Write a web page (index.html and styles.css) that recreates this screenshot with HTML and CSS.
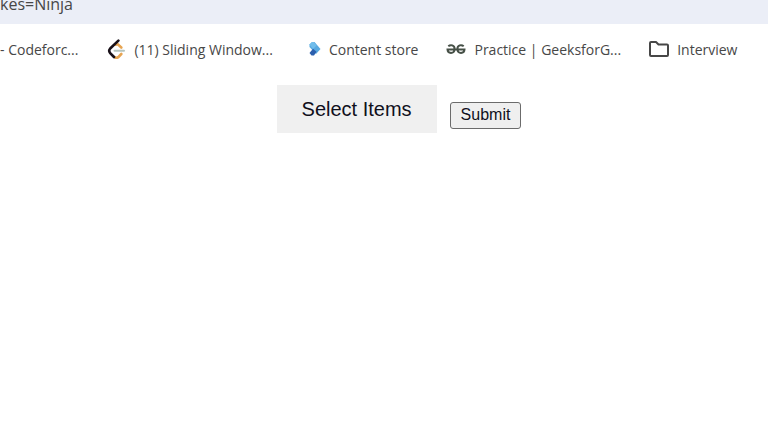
FILE: index.html
```html
<!DOCTYPE html>
<html lang="en">
<head>
  <meta charset="UTF-8">
  <meta name="viewport" content="width=device-width, initial-scale=1.0">
  <title>Select Items</title>
  <link rel="stylesheet" href="styles.css">
</head>
<body>
  <div class="address-bar">kes=Ninja</div>

  <nav class="bookmarks">
    <a href="#">- Codeforc...</a>
    <a href="#">
      <svg width="20" height="20" viewBox="0 0 20 20" fill="none" stroke-linecap="round" stroke-width="2.6">
        <path d="M9.5 5.8l2.4-.5 3.4 3.2M15.3 15l-3 3.2q-1.8 1.2-3.8 0" stroke="#e7a553"/>
        <path d="M12.4 1.6L4.2 9.5q-2 2.2 0 4.6L8 18" stroke="#181018"/>
        <path d="M8.5 11.8h9.5" stroke="#b5c4bd" stroke-width="2"/>
      </svg>
      (11) Sliding Window...
    </a>
    <a href="#">
      <svg width="20" height="20" viewBox="0 0 20 20">
        <path d="M8.5 5.5L11 3h2.5l6 7-4.5 5-6.5-7z" fill="#58a9e0"/>
        <path d="M8.5 5.5L11 3h2l2.5 3.5L12 10z" fill="#71bdeb"/>
        <path d="M12 9.8l3.5 3L13 16.5h-2.5l-2-2.5z" fill="#2b5fae"/>
      </svg>
      Content store
    </a>
    <a href="#">
      <svg width="20" height="20" viewBox="0 0 20 20" fill="none" stroke="#465047" stroke-width="2">
        <path d="M2.3 7.3Q4 5.8 6.3 6.4Q8.8 7.3 8.6 10.5Q8.2 14 5 14Q1.6 13.8 1.5 10.5H18.5Q18.4 13.8 15 14Q11.8 14 11.4 10.5Q11.2 7.3 13.7 6.4Q16 5.8 17.7 7.3"/>
      </svg>
      Practice | GeeksforG...
    </a>
    <a href="#">
      <svg width="20" height="20" viewBox="0 0 20 20" fill="none" stroke="#474747" stroke-width="2" stroke-linejoin="round">
        <path d="M2 3h5l2.5 2.5H18q1 0 1 1V16q0 1-1 1H2q-1 0-1-1V4q0-1 1-1z"/>
      </svg>
      Interview
    </a>
  </nav>

  <main class="content">
    <button type="button" class="dropdown-btn">Select Items</button>
    <button type="submit" class="submit-btn">Submit</button>
  </main>
</body>
</html>
```

FILE: styles.css
```css
body {
  margin: 0;
  background-color: #fff;
  font-family: "Liberation Sans", Arial, sans-serif;
}

/* Browser bars */
.address-bar {
  height: 24px;
  overflow: hidden;
  background-color: #ebeef7;
  color: #474747;
  font-family: "Open Sans", sans-serif;
  font-size: 16px;
  line-height: 8px;
}
.bookmarks {
  display: flex;
  align-items: center;
  gap: 28px;
  height: 50px;
  overflow: hidden;
  font-family: "Open Sans", sans-serif;
  font-size: 14px;
  white-space: nowrap;
}
.bookmarks a {
  display: flex;
  align-items: center;
  gap: 8px;
  flex-shrink: 0;
  color: #474747;
  text-decoration: none;
}

/* Page content */
.content {
  display: flex;
  justify-content: center;
  align-items: flex-end;
  gap: 13px;
  padding: 11px 0 0 30px;
}
.dropdown-btn {
  width: 160px;
  height: 48px;
  border: none;
  background-color: #f0f0f0;
  color: #10101c;
  font-family: inherit;
  font-size: 20px;
  cursor: pointer;
}
.submit-btn {
  margin-bottom: 4px;
  padding: 2px 10px 4px;
  border: 1px solid #6b6b6b;
  border-radius: 3px;
  background-color: #efefef;
  color: #10101c;
  font-family: inherit;
  font-size: 16px;
  line-height: 19px;
}
```
